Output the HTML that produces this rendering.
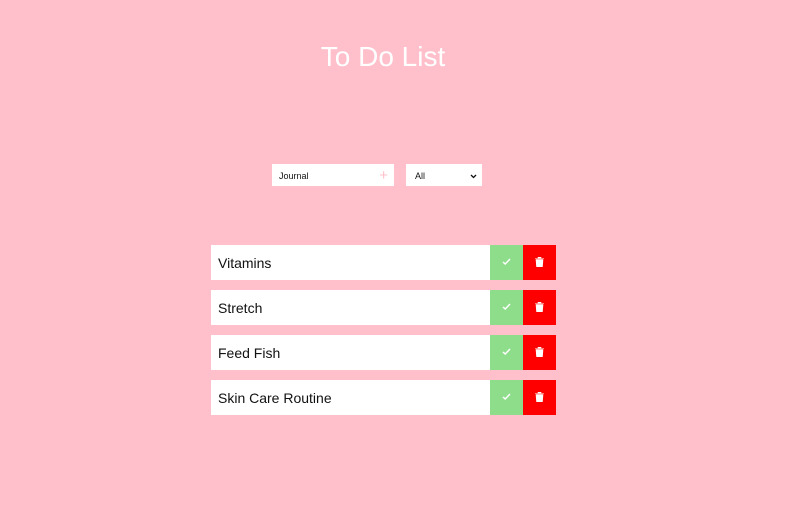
<!DOCTYPE html>
<html><head><style>
body{margin:0;width:800px;height:510px;background:#ffc0cb;font-family:"Liberation Sans",sans-serif;position:relative;overflow:hidden}
h1{position:absolute;top:39px;left:-17px;width:800px;margin:0;text-align:center;color:#fff;font-weight:normal;font-size:28px;line-height:36px}
.inp{position:absolute;left:272px;top:164px;width:122px;height:22px;background:#fff}
.inp span{position:absolute;left:7px;top:7px;font-size:9px;color:#111}
.inp b{position:absolute;right:6px;top:3px;font-weight:normal;color:#ffc0cb;font-size:15px}
.sel{position:absolute;left:406px;top:164px;width:76px;height:22px;background:#fff}
.sel span{position:absolute;left:9px;top:7px;font-size:9px;color:#111}
.sel svg{position:absolute;right:5px;top:10px}
.item{position:absolute;left:211px;width:345px;height:35px;background:#fff}
.item span{position:absolute;left:7px;top:10px;font-size:14px;color:#111}
.ck{position:absolute;left:279px;top:0;width:33px;height:35px;background:#8edd8a}
.tr{position:absolute;left:312px;top:0;width:33px;height:35px;background:#ff0000}
.ck svg,.tr svg{position:absolute;left:12px;top:12px}
</style></head><body>
<h1>To Do List</h1>
<div class="inp"><span>Journal</span><b>+</b></div>
<div class="sel"><span>All</span><svg width="7" height="5" viewBox="0 0 7 5"><path d="M1 1l2.5 2.5L6 1" stroke="#111" stroke-width="1.3" fill="none"/></svg></div>

<div class="item" style="top:245px"><span>Vitamins</span><div class="ck"><svg width="9" height="9" viewBox="0 0 9 9"><path d="M1 5l2.2 2L8 2" stroke="#fff" stroke-width="1.5" fill="none"/></svg></div><div class="tr"><svg width="9" height="10" viewBox="0 0 9 10"><path d="M0 1.5h9M3 1.5V0h3v1.5M1 2.5h7l-.6 7.5H1.6z" fill="#fff" stroke="#fff" stroke-width=".6"/></svg></div></div>
<div class="item" style="top:290px"><span>Stretch</span><div class="ck"><svg width="9" height="9" viewBox="0 0 9 9"><path d="M1 5l2.2 2L8 2" stroke="#fff" stroke-width="1.5" fill="none"/></svg></div><div class="tr"><svg width="9" height="10" viewBox="0 0 9 10"><path d="M0 1.5h9M3 1.5V0h3v1.5M1 2.5h7l-.6 7.5H1.6z" fill="#fff" stroke="#fff" stroke-width=".6"/></svg></div></div>
<div class="item" style="top:335px"><span>Feed Fish</span><div class="ck"><svg width="9" height="9" viewBox="0 0 9 9"><path d="M1 5l2.2 2L8 2" stroke="#fff" stroke-width="1.5" fill="none"/></svg></div><div class="tr"><svg width="9" height="10" viewBox="0 0 9 10"><path d="M0 1.5h9M3 1.5V0h3v1.5M1 2.5h7l-.6 7.5H1.6z" fill="#fff" stroke="#fff" stroke-width=".6"/></svg></div></div>
<div class="item" style="top:380px"><span>Skin Care Routine</span><div class="ck"><svg width="9" height="9" viewBox="0 0 9 9"><path d="M1 5l2.2 2L8 2" stroke="#fff" stroke-width="1.5" fill="none"/></svg></div><div class="tr"><svg width="9" height="10" viewBox="0 0 9 10"><path d="M0 1.5h9M3 1.5V0h3v1.5M1 2.5h7l-.6 7.5H1.6z" fill="#fff" stroke="#fff" stroke-width=".6"/></svg></div></div>
</body></html>
